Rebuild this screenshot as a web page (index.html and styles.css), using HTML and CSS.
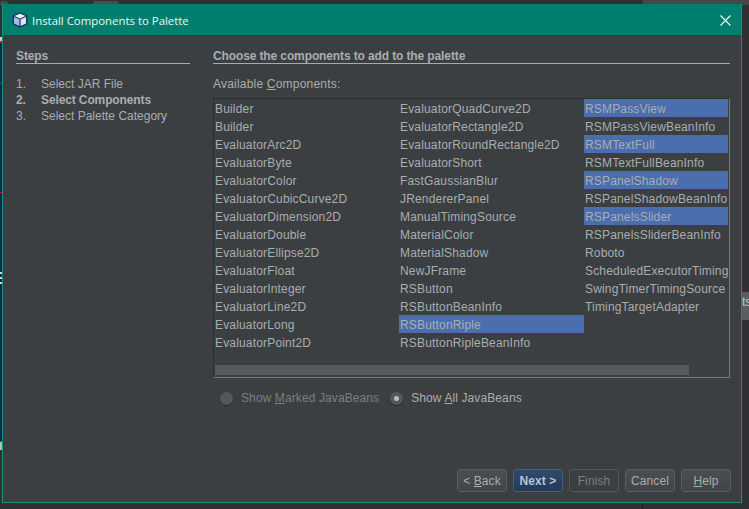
FILE: index.html
```html
<!DOCTYPE html>
<html lang="en">
<head>
    <meta charset="UTF-8">
    <title>Install Components to Palette</title>
    <link rel="stylesheet" href="styles.css">
</head>
<body>
    <div class="desktop">
        <div class="bg-tab bg-tab-left"></div>
        <div class="bg-tab bg-tab-mid"></div>
        <div class="bg-panel"></div>
        <div class="bg-strip"></div>
        <div class="bg-mark bg-light-top"></div>
        <div class="bg-mark bg-red-top"></div>
        <div class="bg-mark bg-red-a"></div>
        <div class="bg-mark bg-red-b"></div>
        <div class="bg-lines"><span></span><span></span><span></span></div>
        <div class="bg-mark bg-red-c"></div>
        <div class="bg-mark bg-light-bottom"></div>
        <div class="bg-ts">ts</div>
        <div class="bg-split"></div>

        <div class="window">
            <div class="titlebar">
                <svg class="app-icon" width="16" height="16" viewBox="0 0 16 16">
                    <path d="M8 .4 14.4 2.8Q15.4 3.2 15.4 4.4V11.4Q15.4 12.4 14.4 12.9L8 15.8 1.6 12.9Q.6 12.4.6 11.4V4.4Q.6 3.2 1.6 2.8Z" fill="#1c3568"/>
                    <path d="M8 1.8 13.6 4 8 6.4 2.4 4Z" fill="#eef2f6"/>
                    <path d="M2 5 7.4 7.3V14L2 11.5Z" fill="#9fbfe2"/>
                    <path d="M8.6 7.3 14 5V11.5L8.6 14Z" fill="#dbe6f2"/>
                </svg>
                <span class="title">Install Components to Palette</span>
                <svg class="close" width="11" height="11" viewBox="0 0 11 11">
                    <path d="M.5.5 10.5 10.5M10.5.5.5 10.5" stroke="#fff" stroke-width="1.1" fill="none"/>
                </svg>
            </div>

            <div class="content">
                <div class="main">
                    <div class="steps">
                        <h3 class="heading">Steps</h3>
                        <ol class="step-list">
                            <li><span class="num">1.</span>Select JAR File</li>
                            <li class="current"><span class="num">2.</span>Select Components</li>
                            <li><span class="num">3.</span>Select Palette Category</li>
                        </ol>
                    </div>

                    <div class="panel">
                        <h3 class="heading">Choose the components to add to the palette</h3>
                        <div class="list-label">Available <u>C</u>omponents:</div>
                        <div class="list-box">
                            <div class="columns">
                                <div class="col">
                                    <div class="item">Builder</div>
                                    <div class="item">Builder</div>
                                    <div class="item">EvaluatorArc2D</div>
                                    <div class="item">EvaluatorByte</div>
                                    <div class="item">EvaluatorColor</div>
                                    <div class="item">EvaluatorCubicCurve2D</div>
                                    <div class="item">EvaluatorDimension2D</div>
                                    <div class="item">EvaluatorDouble</div>
                                    <div class="item">EvaluatorEllipse2D</div>
                                    <div class="item">EvaluatorFloat</div>
                                    <div class="item">EvaluatorInteger</div>
                                    <div class="item">EvaluatorLine2D</div>
                                    <div class="item">EvaluatorLong</div>
                                    <div class="item">EvaluatorPoint2D</div>
                                </div>
                                <div class="col">
                                    <div class="item">EvaluatorQuadCurve2D</div>
                                    <div class="item">EvaluatorRectangle2D</div>
                                    <div class="item">EvaluatorRoundRectangle2D</div>
                                    <div class="item">EvaluatorShort</div>
                                    <div class="item">FastGaussianBlur</div>
                                    <div class="item">JRendererPanel</div>
                                    <div class="item">ManualTimingSource</div>
                                    <div class="item">MaterialColor</div>
                                    <div class="item">MaterialShadow</div>
                                    <div class="item">NewJFrame</div>
                                    <div class="item">RSButton</div>
                                    <div class="item">RSButtonBeanInfo</div>
                                    <div class="item selected">RSButtonRiple</div>
                                    <div class="item">RSButtonRipleBeanInfo</div>
                                </div>
                                <div class="col col-last">
                                    <div class="item selected">RSMPassView</div>
                                    <div class="item">RSMPassViewBeanInfo</div>
                                    <div class="item selected">RSMTextFull</div>
                                    <div class="item">RSMTextFullBeanInfo</div>
                                    <div class="item selected">RSPanelShadow</div>
                                    <div class="item">RSPanelShadowBeanInfo</div>
                                    <div class="item selected">RSPanelsSlider</div>
                                    <div class="item">RSPanelsSliderBeanInfo</div>
                                    <div class="item">Roboto</div>
                                    <div class="item">ScheduledExecutorTimingSource</div>
                                    <div class="item">SwingTimerTimingSource</div>
                                    <div class="item">TimingTargetAdapter</div>
                                </div>
                            </div>
                            <div class="scroll-track"><div class="scroll-thumb"></div></div>
                        </div>

                        <div class="radios">
                            <div class="radio-row disabled"><span class="radio"></span><span>Show <u>M</u>arked JavaBeans</span></div>
                            <div class="radio-row"><span class="radio checked"></span><span>Show <u>A</u>ll JavaBeans</span></div>
                        </div>
                    </div>
                </div>

                <div class="buttons">
                    <button class="btn" type="button">&lt; <u>B</u>ack</button>
                    <button class="btn btn-default" type="button">Next &gt;</button>
                    <button class="btn btn-disabled" type="button">Finish</button>
                    <button class="btn" type="button">Cancel</button>
                    <button class="btn" type="button"><u>H</u>elp</button>
                </div>
            </div>
        </div>
    </div>
</body>
</html>
```
FILE: styles.css
```css
* {
    box-sizing: border-box;
}
html, body {
    margin: 0;
    height: 100%;
    overflow: hidden;
    background-color: #2f3133;
}
body {
    font-family: "Liberation Sans", Arial, sans-serif;
    font-size: 12px;
    color: #a9adb0;
}
.desktop {
    position: relative;
    width: 749px;
    height: 509px;
    overflow: hidden;
}

/* stuff from the ide behind the dialog */
.bg-tab {
    position: absolute;
    top: 1px;
    height: 4px;
    background-color: #4a4d50;
    border-radius: 3px 3px 0 0;
}
.bg-tab-left {
    left: 0;
    width: 8px;
}
.bg-tab-mid {
    left: 93px;
    width: 26px;
}
.bg-panel {
    position: absolute;
    left: 643px;
    top: 0;
    width: 106px;
    height: 5px;
    background-color: #45484b;
}
.bg-strip {
    position: absolute;
    left: 0;
    top: 43px;
    width: 2px;
    height: 398px;
    background-color: #06304a;
}
.bg-mark {
    position: absolute;
    left: 0;
    width: 2px;
}
.bg-light-top {
    top: 37px;
    height: 4px;
    background-color: #c8d0d6;
}
.bg-red-top {
    top: 41px;
    height: 2px;
    background-color: #e01010;
}
.bg-red-a {
    top: 83px;
    height: 1px;
    background-color: #c01818;
}
.bg-red-b {
    top: 192px;
    height: 1px;
    background-color: #e01010;
}
.bg-red-c {
    top: 441px;
    height: 1px;
    background-color: #d01830;
}
.bg-light-bottom {
    top: 442px;
    height: 8px;
    background-color: #b4bcc2;
}
.bg-lines {
    position: absolute;
    left: 0;
    top: 272px;
    display: flex;
    flex-direction: column;
    gap: 3px;
}
.bg-lines span {
    width: 2px;
    height: 2px;
    background-color: #d0d4d6;
}
.bg-ts {
    position: absolute;
    left: 742px;
    top: 292px;
    width: 7px;
    height: 28px;
    padding-top: 3px;
    background-color: #5a5e60;
    color: #c5c8ca;
    overflow: hidden;
}
.bg-split {
    position: absolute;
    left: 642px;
    top: 504px;
    width: 1px;
    height: 5px;
    background-color: #1c1d1e;
}

.window {
    position: absolute;
    left: 2px;
    top: 4px;
    width: 740px;
    height: 499px;
    display: flex;
    flex-direction: column;
    background-color: #3c3f41;
    border: 1px solid #1f8a7b;
    border-top: none;
}
.titlebar {
    display: flex;
    align-items: center;
    flex: none;
    height: 31px;
    padding: 1px 10px 0 9px;
    background-color: #007f6e;
    color: #f2f5f4;
    font-family: "Open Sans", sans-serif;
    font-size: 11.4px;
}
.app-icon {
    margin-right: 4px;
}
.title {
    flex: 1;
}
.content {
    flex: 1;
    display: flex;
    flex-direction: column;
    padding: 13px 10px 10px 13px;
}
.main {
    flex: 1;
    display: flex;
    gap: 23px;
}
.steps {
    width: 174px;
    flex: none;
}
.heading {
    margin: 0;
    height: 16px;
    font-size: 12px;
    line-height: 17px;
    font-weight: bold;
    letter-spacing: -0.12px;
    color: #a9adb0;
    border-bottom: 1px solid #a8abad;
}
.step-list {
    list-style: none;
    margin: 12px 0 0;
    padding: 0;
}
.step-list li {
    height: 16px;
    line-height: 16px;
    display: flex;
}
.num {
    width: 25px;
    flex: none;
}
.current {
    font-weight: bold;
    letter-spacing: -0.12px;
}
.panel {
    width: 517px;
    flex: none;
}
.list-label {
    margin-top: 13px;
    height: 15px;
    line-height: 15px;
    letter-spacing: 0.2px;
}
.list-box {
    margin-top: 6px;
    height: 280px;
    border: 1px solid #2a2c2d;
    border-right-color: #77797b;
    border-bottom-color: #77797b;
    display: flex;
    flex-direction: column;
}
.columns {
    flex: 1;
    display: flex;
    overflow: hidden;
}
.col {
    width: 185px;
    flex: none;
}
.col-last {
    width: 144px;
    overflow: hidden;
}
.item {
    height: 18px;
    line-height: 20px;
    padding-left: 1px;
    letter-spacing: 0.17px;
    white-space: nowrap;
}
.selected {
    background-color: #4b6eaf;
}
.scroll-track {
    flex: none;
    height: 12px;
    padding-left: 1px;
}
.scroll-thumb {
    width: 474px;
    height: 10px;
    background-color: #58595b;
}
.radios {
    display: flex;
    margin-top: 12px;
    padding-left: 7px;
    gap: 11px;
}
.radio-row {
    display: flex;
    align-items: center;
    height: 16px;
    letter-spacing: 0.1px;
    color: #a9adb0;
}
.radio-row.disabled {
    color: #7b7e81;
}
.radio {
    width: 13px;
    height: 13px;
    margin-right: 8px;
    border-radius: 50%;
    background-color: #55585a;
    box-shadow: 0 1px 1px #2a2c2d;
    display: flex;
    align-items: center;
    justify-content: center;
}
.checked::after {
    content: "";
    width: 5px;
    height: 5px;
    border-radius: 50%;
    background-color: #b9bcbe;
}
.buttons {
    display: flex;
    justify-content: flex-end;
    gap: 6px;
}
.btn {
    width: 50px;
    height: 23px;
    padding: 0;
    font-family: inherit;
    font-size: 12px;
    letter-spacing: 0.1px;
    color: #a9adb0;
    background: linear-gradient(#4a4e50, #424547);
    border: 1px solid #5a5d5f;
    border-radius: 3px;
}
.btn-default {
    color: #b6c3d0;
    font-weight: bold;
    background: linear-gradient(#2f4a6b, #25395a);
    border-color: #4b5d70;
}
.btn-disabled {
    color: #7b7e81;
    background: none;
    border-color: #55585a;
}
```
